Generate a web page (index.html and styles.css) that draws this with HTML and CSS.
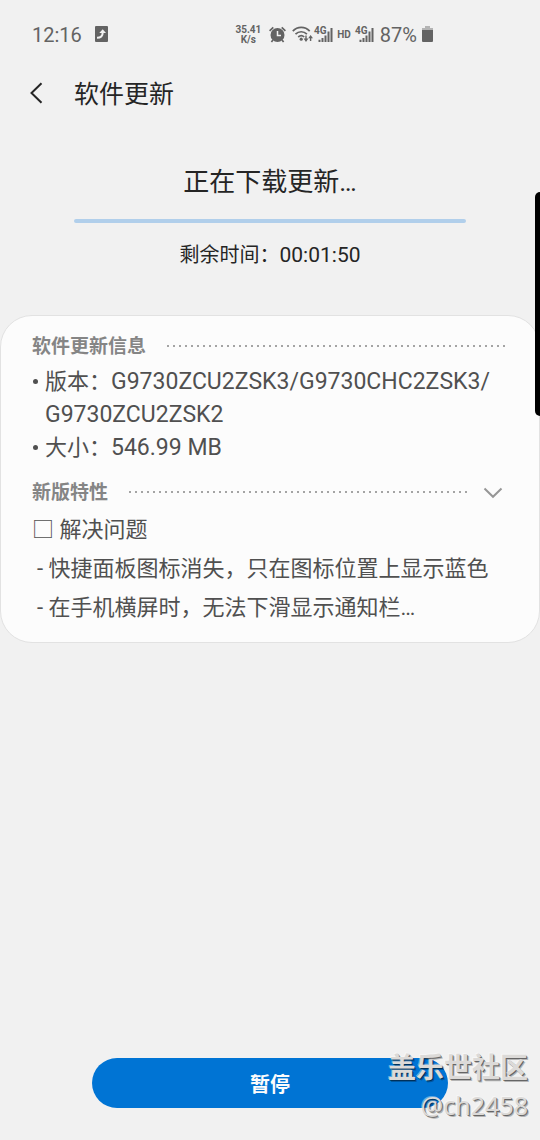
FILE: index.html
```html
<!DOCTYPE html>
<html lang="zh-CN">
<head>
<meta charset="utf-8">
<meta name="viewport" content="width=device-width, initial-scale=1">
<title>软件更新</title>
<link rel="stylesheet" href="styles.css">
</head>
<body>
<div class="screen">
  <div class="statusbar">
    <span class="clock">12:16</span>
    <svg class="app-icon" width="13" height="16" viewBox="0 0 13 16"><rect width="13" height="16" rx="1" fill="#636363"/><path d="M2 11.800c3.800 0 5.700-1.500 5.700-5.300" fill="none" stroke="#f1f1f1" stroke-width="2"/><path d="M4.300 7 7.700 3.300 11 7z" fill="#f1f1f1"/></svg>
    <div class="indicators">
      <span class="speed"><span>35.41</span><span>K/s</span></span>
      <svg class="alarm" width="17" height="17" viewBox="0 0 17 17"><circle cx="8.500" cy="9" r="7" fill="#636363"/><path d="M.6 4.800 4.300 1.300M16.400 4.800 12.700 1.300M4 14l-1.600 2M13 14l1.600 2" stroke="#636363" stroke-width="1.700" fill="none"/><path d="M8.500 5v4.600H12" stroke="#f1f1f1" stroke-width="1.500" fill="none"/></svg>
      <svg class="wifi" width="21" height="17" viewBox="0 0 21 17"><g fill="none" stroke="#636363" stroke-width="1.700"><path d="M.8 5.200C5.500.2 13 .2 17.700 5.200"/><path d="M3.500 8.200c3.200-3.300 8.200-3.300 11.400 0"/><path d="M6.200 11c2-1.700 4.200-1.700 6 0"/></g><circle cx="9.200" cy="13.200" r="1.600" fill="#636363"/><path d="M14 9.500v4.500M18.600 15v-3.500" stroke="#636363" stroke-width="1.400"/><path d="M11.600 12.500h4.800L14 16zM16.200 12.200H21L18.600 9z" fill="#636363"/></svg>
      <svg class="signal" width="19" height="17" viewBox="0 0 19 17"><text class="g4" x="0" y="8">4G</text><path d="M5.500 16v-2.200M8.500 16v-4M11.500 16v-6.500M14.500 16V5.500M17.500 16V2" stroke="#636363" stroke-width="2"/></svg>
      <span class="hd">HD</span>
      <svg class="signal" width="19" height="17" viewBox="0 0 19 17"><text class="g4" x="0" y="8">4G</text><path d="M5.500 16v-2.200M8.500 16v-4M11.500 16v-6.500M14.500 16V5.500M17.500 16V2" stroke="#636363" stroke-width="2"/></svg>
      <span class="percent">87%</span>
      <svg width="11" height="16" viewBox="0 0 11 16"><path d="M3 0h5v2h3v3H0V2h3z" fill="#b4b4b4"/><path d="M0 4h11v11a1 1 0 0 1-1 1H1a1 1 0 0 1-1-1z" fill="#636363"/></svg>
    </div>
  </div>

  <header class="appbar">
    <button class="back" type="button" aria-label="返回"><svg width="13" height="22" viewBox="0 0 13 22"><path d="M11.500 1.200 1.500 11l10 9.800" fill="none" stroke="#252525" stroke-width="2"/></svg></button>
    <h1 class="title">软件更新</h1>
  </header>

  <main class="content">
    <section class="download">
      <label class="download-label" for="bar">正在下载更新…</label>
      <progress class="bar" id="bar" value="0" max="100"></progress>
      <p class="remaining"><span class="remaining-label">剩余时间：</span>00:01:50</p>
    </section>

    <section class="card">
      <div class="card-head"><h2 class="heading">软件更新信息</h2><span class="dots"></span></div>
      <ul class="info">
        <li class="info-item"><span class="info-label">版本：</span>G9730ZCU2ZSK3/<wbr>G9730CHC2ZSK3/<wbr>G9730ZCU2ZSK2</li>
        <li class="info-item"><span class="info-label">大小：</span>546.99 MB</li>
      </ul>
      <div class="card-head features-head"><h2 class="heading">新版特性</h2><span class="dots"></span><button class="expand" type="button" aria-label="展开"><svg width="20" height="12" viewBox="0 0 20 12"><path d="m1.500 1.500 8.500 8.300 8.500-8.300" fill="none" stroke="#969696" stroke-width="2"/></svg></button></div>
      <div class="features">
        <p class="feature"><span class="square">□</span> 解决问题</p>
        <p class="feature sub">- 快捷面板图标消失，只在图标位置上显示蓝色</p>
        <p class="feature sub">- 在手机横屏时，无法下滑显示通知栏…</p>
      </div>
    </section>
  </main>

  <footer class="actions"><button class="pause" type="button">暂停</button></footer>

  <div class="edge-handle"></div>
  <div class="watermark"><span class="mark-site">盖乐世社区</span><span class="mark-user">@ch2458</span></div>
</div>
</body>
</html>
```

FILE: styles.css
```css
* { box-sizing: border-box; }
body {
  margin: 0;
  background: #f1f1f1;
  color: #252525;
  font-family: Roboto, "Noto Sans CJK SC", sans-serif;
}
h1, h2, p, ul { margin: 0; padding: 0; font-weight: 400; }
button { padding: 0; border: 0; background: none; font-family: inherit; }
svg { display: block; flex: none; }
.screen {
  position: relative;
  display: flex;
  flex-direction: column;
  min-height: 100vh;
  overflow: hidden;
}
.statusbar {
  display: flex;
  align-items: center;
  height: 68px;
  padding: 0 107px 0 32px;
  color: #636363;
}
.clock { padding-top: 2px; font-size: 20px; }
.app-icon { margin-left: 13px; }
.indicators { display: flex; align-items: center; margin-left: auto; }
.speed {
  display: flex;
  flex-direction: column;
  align-items: center;
  padding-top: 1px;
  font-size: 10px;
  font-weight: 700;
  line-height: 10px;
}
.alarm { margin-left: 8px; }
.wifi { margin-left: 6px; }
.signal { margin-left: 1px; overflow: visible; }
.g4 { font-size: 10px; font-weight: 700; fill: #636363; }
.hd { margin: 0 3px 0 4px; font-size: 10px; font-weight: 700; }
.percent { margin: 0 5px 0 6px; padding-top: 2px; font-size: 20px; }
.appbar { display: flex; align-items: center; height: 50px; padding-left: 30px; }
.back { width: 44px; }
.title { padding-top: 3px; font-size: 25px; line-height: 36px; }
.download {
  display: flex;
  flex-direction: column;
  align-items: center;
  padding: 44px 74px 45px;
  text-align: center;
}
.download-label { font-size: 26px; line-height: 40px; }
.bar {
  appearance: none;
  width: 100%;
  height: 4px;
  margin: 17px 0;
  border: 0;
  border-radius: 2px;
  overflow: hidden;
  background: #b1cfeb;
}
.bar::-webkit-progress-bar { background: #b1cfeb; }
.bar::-webkit-progress-value { background: #0074d4; }
.remaining { font-size: 21px; line-height: 30px; }
.remaining-label { font-size: 20px; }
.card {
  padding: 15px 31px;
  border: 1px solid #e2e2e2;
  border-radius: 32px;
  background: #fcfcfc;
  color: #505050;
}
.card-head { display: flex; align-items: center; gap: 21px; }
.heading { color: #858585; font-size: 19px; font-weight: 700; line-height: 32px; }
.dots {
  flex: 1;
  height: 2px;
  margin-bottom: 3px;
  background: repeating-linear-gradient(to right, #a4a4a4 0 2px, transparent 2px 6px);
}
.info { padding: 2px 0 0 13px; list-style: none; }
.info-item { position: relative; font-size: 23px; line-height: 33px; }
.info-label { font-size: 22px; }
.info-item::before {
  content: "";
  position: absolute;
  top: 14px;
  left: -12px;
  width: 5px;
  height: 5px;
  border-radius: 50%;
  background: #505050;
}
.features-head { margin-top: 13px; }
.expand { margin: 0 5px 0 -7px; }
.features { padding-top: 1px; }
.feature { font-size: 22px; line-height: 39px; }
.sub { padding-left: 5px; }
.actions { margin-top: auto; padding: 0 17% 32px; }
.pause {
  width: 100%;
  height: 50px;
  border-radius: 25px;
  background: #0074d4;
  color: #fcfcfc;
  font-size: 20px;
  font-weight: 700;
}
.edge-handle {
  position: absolute;
  top: 192px;
  right: -5px;
  width: 10px;
  height: 224px;
  border-radius: 5px;
  background: #000;
}
.watermark {
  position: absolute;
  right: 12px;
  bottom: 17px;
  display: flex;
  flex-direction: column;
  align-items: flex-end;
  color: #dcdad8;
  text-shadow: 1px 1px 0 rgba(0, 0, 0, 0.45), 2px 2px 0 rgba(0, 0, 0, 0.25), -1px -1px 0 rgba(255, 255, 255, 0.4);
  pointer-events: none;
}
.mark-site { font-size: 28px; font-weight: 700; line-height: 36px; }
.mark-user { font-family: "Noto Sans", sans-serif; font-size: 25px; line-height: 36px; }
```
